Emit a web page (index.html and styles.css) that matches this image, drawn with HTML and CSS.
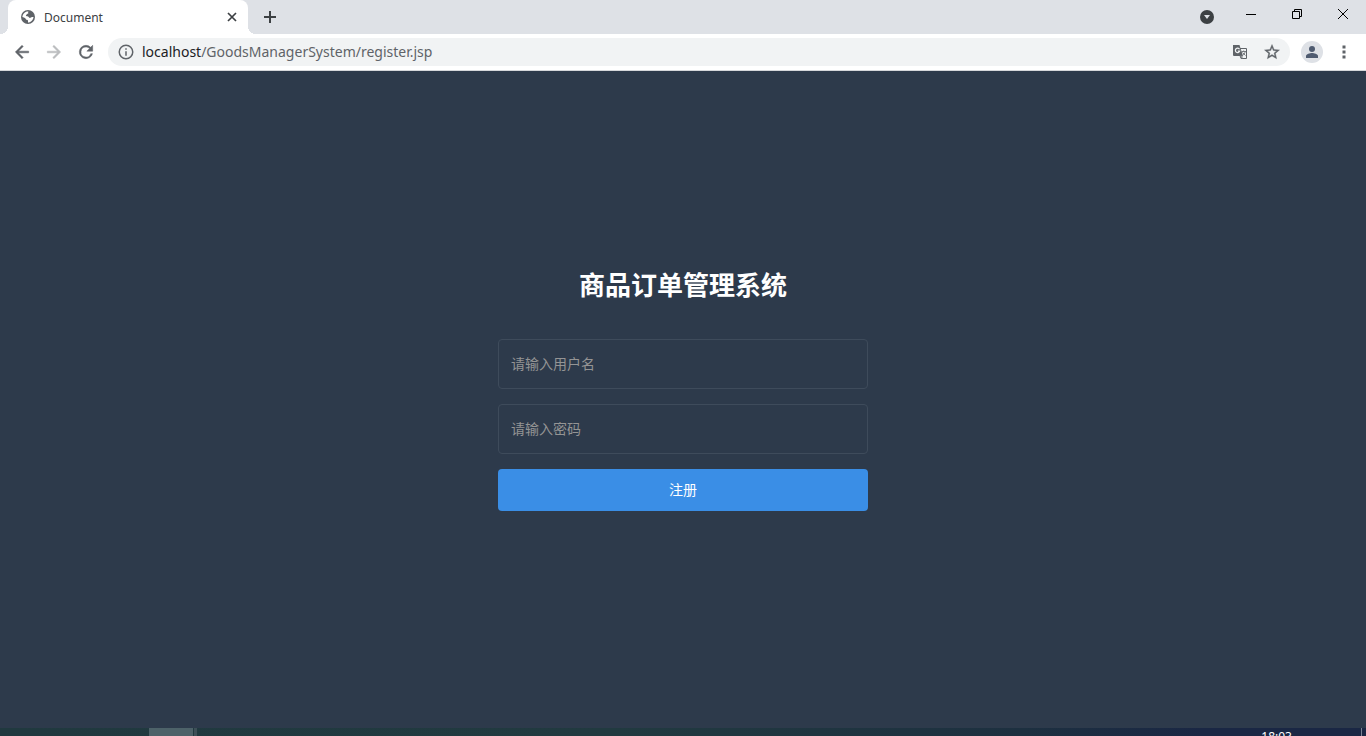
FILE: index.html
```html
<!DOCTYPE html>
<html lang="zh-CN">
	<head>
		<meta charset="utf-8">
		<title>Document</title>
		<link rel="stylesheet" href="styles.css">
	</head>
	<body>
		<header class="tabs">
			<span class="foot foot-left"></span>
			<div class="tab">
				<svg class="globe" viewBox="2 2 20 20"><circle cx="12" cy="12" r="10" fill="#5f6368"/><path fill="#fff" d="M13 4.200c-1 .6-1 1.600-.4 2.300-.6 1-2 .6-2.200 1.700 0 .9-1.400.8-1.400 1.800 0 .8 1 1 2 1 2 0 2 2 3.500 2.300 1.200.2 1.900-1.300 3.300-1.300h2.100c-.4 4-3.600 7.700-7.900 8v-2.300c0-1.400-1-1.700-2.500-1.700-1-2-2.200-3.500-5.500-4C4.200 7.500 8 3.600 13 4.200z"/></svg>
				<span class="tab-title">Document</span>
				<button class="tab-close" aria-label="关闭标签页"><svg width="10" height="10" viewBox="0 0 10 10"><path d="M1 1l8 8M9 1L1 9" stroke="#3c4043" stroke-width="1.700"/></svg></button>
			</div>
			<span class="foot foot-right"></span>
			<button class="new-tab" aria-label="新标签页"><svg width="12" height="12" viewBox="0 0 12 12"><path d="M6 0v12M0 6h12" stroke="#3c4043" stroke-width="2"/></svg></button>
			<button class="search-tab" aria-label="搜索标签页"><svg width="14" height="14" viewBox="0 0 14 14"><circle cx="7" cy="7" r="7" fill="#3c4043"/><path d="M4 5h6l-3 4z" fill="#dee1e6"/></svg></button>
			<button class="win" aria-label="最小化"><svg width="10" height="10" viewBox="0 0 10 10"><path d="M0 5.500h10" stroke="#000"/></svg></button>
			<button class="win" aria-label="还原"><svg width="10" height="10" viewBox="0 0 10 10"><path d="M.5 2.500h7v7h-7zM2.500 2.500v-2h7v7h-2" fill="none" stroke="#000"/></svg></button>
			<button class="win" aria-label="关闭"><svg width="10" height="10" viewBox="0 0 10 10"><path d="M0 0l10 10M10 0L0 10" stroke="#000"/></svg></button>
		</header>
		<nav class="toolbar">
			<button class="tool" aria-label="后退"><svg width="20" height="20" viewBox="0 0 24 24"><path fill="#5f6368" stroke="#5f6368" stroke-width=".6" d="M20 11H7.830l5.590-5.590L12 4l-8 8 8 8 1.410-1.410L7.830 13H20z"/></svg></button>
			<button class="tool" aria-label="前进"><svg width="20" height="20" viewBox="0 0 24 24"><path fill="#babcbe" stroke="#babcbe" stroke-width=".6" d="M12 4l-1.410 1.410L16.170 11H4v2h12.170l-5.580 5.590L12 20l8-8z"/></svg></button>
			<button class="tool" aria-label="重新加载"><svg width="20" height="20" viewBox="0 0 24 24"><path fill="#5f6368" stroke="#5f6368" stroke-width=".6" d="M17.650 6.350A7.960 7.960 0 0 0 12 4a8 8 0 1 0 7.730 10h-2.080A6 6 0 1 1 12 6c1.660 0 3.140.69 4.220 1.780L13 11h7V4z"/></svg></button>
			<div class="address">
				<svg width="18" height="18" viewBox="0 0 24 24"><path fill="#5f6368" d="M11 17h2v-6h-2zm0-8h2V7h-2zm1-7a10 10 0 1 0 0 20 10 10 0 0 0 0-20zm0 18a8 8 0 1 1 0-16 8 8 0 0 1 0 16z"/></svg>
				<span class="url"><span class="host">localhost</span>/GoodsManagerSystem/register.jsp</span>
				<button class="tool" aria-label="翻译"><svg width="16" height="16" viewBox="0 0 16 16"><path d="M6 4.500h8.500v10H9z" fill="#f1f3f4" stroke="#5f6368"/><path d="M1 1h6.500L11 12H2a1 1 0 0 1-1-1z" fill="#5f6368"/><path d="M7.500 5.200A2.200 2.200 0 1 0 7.700 7H5.800" fill="none" stroke="#f1f3f4" stroke-width="1.200"/><path d="M9.500 7.500h4.500M11.700 6.500v1M13.200 7.500c-.3 2-1.500 3-2.500 4M10.500 8.500l3 3M8 12l2 2.500V12z" fill="none" stroke="#777b7f"/></svg></button>
				<button class="tool" aria-label="收藏"><svg width="18" height="18" viewBox="0 0 24 24"><path fill="#5f6368" stroke="#5f6368" stroke-width=".5" d="M22 9.240l-7.190-.62L12 2 9.190 8.630 2 9.240l5.460 4.730L5.820 21 12 17.270 18.180 21l-1.630-7.030zM12 15.400l-3.760 2.270 1-4.280-3.320-2.880 4.380-.38L12 6.100l1.710 4.040 4.380.38-3.320 2.880 1 4.280z"/></svg></button>
			</div>
			<button class="tool" aria-label="用户"><svg width="22" height="22" viewBox="0 0 22 22"><circle cx="11" cy="11" r="11" fill="#dee1e6"/><circle cx="11" cy="8" r="3" fill="#4f5b70"/><path d="M5 17v-2c0-2 4-3 6-3s6 1 6 3v2z" fill="#4f5b70"/></svg></button>
			<button class="tool" aria-label="菜单"><svg width="4" height="14" viewBox="0 0 4 14"><path fill="#5f6368" d="M.5.500h3v3h-3zM.5 5.500h3v3h-3zM.5 10.500h3v3h-3z"/></svg></button>
		</nav>
		<main class="page">
			<form class="register">
				<h1>商品订单管理系统</h1>
				<input type="text" name="username" placeholder="请输入用户名" aria-label="用户名">
				<input type="password" name="password" placeholder="请输入密码" aria-label="密码">
				<button type="button" class="submit">注册</button>
			</form>
		</main>
		<footer class="taskbar">
			<span class="task"></span>
			<span class="task-edge"></span>
			<span class="clock">18:03</span>
			<span class="show-desktop"></span>
		</footer>
	</body>
</html>
```

FILE: styles.css
```css
* {
	box-sizing: border-box;
}
body {
	display: flex;
	flex-direction: column;
	height: 100vh;
	margin: 0;
	overflow: hidden;
	background: #2d3a4b;
	font-family: "Noto Sans", "Noto Sans CJK SC", sans-serif;
}
button {
	display: flex;
	align-items: center;
	justify-content: center;
	padding: 0;
	border: none;
	background: none;
	font-family: inherit;
}
svg {
	flex: none;
}

/* 标签栏 */
.tabs {
	display: flex;
	flex: none;
	height: 34px;
	background: #dee1e6;
}
.foot {
	align-self: flex-end;
	width: 8px;
	height: 8px;
}
.foot-left {
	background: radial-gradient(circle at 0 0, #dee1e6 8px, #fff 8px);
}
.foot-right {
	background: radial-gradient(circle at 100% 0, #dee1e6 8px, #fff 8px);
}
.tab {
	display: flex;
	align-items: center;
	width: 240px;
	padding: 0 8px 0 13px;
	border-radius: 8px 8px 0 0;
	background: #fff;
}
.globe {
	width: 14px;
	height: 14px;
}
.tab-title {
	flex: 1;
	margin-left: 9px;
	font-size: 12px;
	color: #3c4043;
}
.tab-close {
	width: 16px;
	height: 16px;
}
.new-tab {
	width: 28px;
	margin-right: auto;
}
.search-tab {
	width: 28px;
	margin-right: 7px;
}
.win {
	width: 46px;
	height: 28px;
}

/* 工具栏 */
.toolbar {
	display: flex;
	flex: none;
	align-items: center;
	height: 37px;
	padding: 0 6px;
	border-bottom: 1px solid #d5d7da;
	background: #fff;
}
.tool {
	width: 32px;
	height: 28px;
}
.address {
	display: flex;
	flex: 1;
	align-items: center;
	height: 28px;
	margin: 0 6px;
	padding: 0 2px 0 9px;
	border-radius: 14px;
	background: #f1f3f4;
}
.url {
	flex: 1;
	margin-left: 7px;
	padding-bottom: 2px;
	font-size: 14px;
	color: #5f6368;
}
.host {
	color: #202124;
}

/* 注册表单 */
.page {
	flex: 1;
	padding-top: 196px;
}
.register {
	display: flex;
	flex-direction: column;
	gap: 15px;
	width: 370px;
	margin: 0 auto;
}
h1 {
	margin: 0 0 21px;
	font-size: 26px;
	line-height: 36px;
	text-align: center;
	color: #fff;
}
.register input {
	height: 50px;
	padding: 0 12px 2px;
	border: 1px solid #3e4b5b;
	border-radius: 4px;
	background: #2d3a4b;
	font-family: inherit;
	font-size: 14px;
	color: #fff;
}
.register input::placeholder {
	color: #949494;
}
.submit {
	height: 42px;
	padding-bottom: 2px;
	border-radius: 4px;
	background: #3a8ee6;
	font-size: 14px;
	color: #fff;
}

/* 任务栏 */
.taskbar {
	display: flex;
	flex: none;
	height: 8px;
	padding-left: 149px;
	overflow: hidden;
	background: linear-gradient(to right, #20393f, #213a40 45%, #1d3040 75%, #1a2744 88%, #1a2744);
}
.task {
	width: 44px;
	margin-right: 1px;
	background: #4d6269;
}
.task-edge {
	width: 3px;
	background: #3d4f57;
}
.clock {
	margin-left: auto;
	padding-top: 1px;
	font-size: 12px;
	line-height: 16px;
	color: #fff;
}
.show-desktop {
	width: 5px;
	margin-left: 69px;
	border-left: 1px solid #7a8394;
}
```
